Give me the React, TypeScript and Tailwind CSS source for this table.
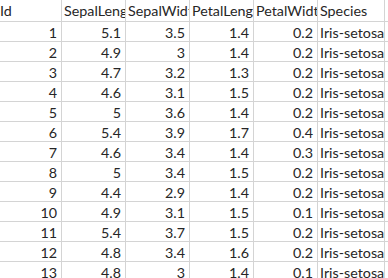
import React from "react";

const rows: [number, string, string, string, string, string][] = [
  [1, "5.1", "3.5", "1.4", "0.2", "Iris-setosa"],
  [2, "4.9", "3", "1.4", "0.2", "Iris-setosa"],
  [3, "4.7", "3.2", "1.3", "0.2", "Iris-setosa"],
  [4, "4.6", "3.1", "1.5", "0.2", "Iris-setosa"],
  [5, "5", "3.6", "1.4", "0.2", "Iris-setosa"],
  [6, "5.4", "3.9", "1.7", "0.4", "Iris-setosa"],
  [7, "4.6", "3.4", "1.4", "0.3", "Iris-setosa"],
  [8, "5", "3.4", "1.5", "0.2", "Iris-setosa"],
  [9, "4.4", "2.9", "1.4", "0.2", "Iris-setosa"],
  [10, "4.9", "3.1", "1.5", "0.1", "Iris-setosa"],
  [11, "5.4", "3.7", "1.5", "0.2", "Iris-setosa"],
  [12, "4.8", "3.4", "1.6", "0.2", "Iris-setosa"],
  [13, "4.8", "3", "1.4", "0.1", "Iris-setosa"],
];

const headers = ["Id", "SepalLengthCm", "SepalWidthCm", "PetalLengthCm", "PetalWidthCm"];

const cell = "w-[64px] shrink-0 border-r border-[#d4d4d4] overflow-hidden whitespace-nowrap flex items-center";
const last = "w-[67px] shrink-0 border-r border-[#d4d4d4] overflow-hidden whitespace-nowrap flex items-center";

export default function App() {
  return (
    <div
      className="w-[388px] h-[278px] overflow-hidden bg-white text-[#262626] text-[14.3px]"
      style={{ fontFamily: "Lato, 'Open Sans', sans-serif" }}
    >
      <div className="ml-[-2px] w-[400px]">
        <div className="flex h-[22px] border-b border-[#d4d4d4]">
          {headers.map((h, i) => (
            <div key={i} className={`${cell} pl-[2px] pt-[1px]`}>
              {h}
            </div>
          ))}
          <div className={`${last} pl-[2px] pt-[1px]`}>Species</div>
          <div className="flex-1" />
        </div>
        {rows.map((r) => (
          <div key={r[0]} className="flex h-[20px] border-b border-[#d4d4d4]">
            {r.slice(0, 5).map((v, i) => (
              <div key={i} className={`${cell} justify-end pr-[4px] pt-[2px]`}>
                {v}
              </div>
            ))}
            <div className={`${last} pl-[2px] pt-[2px]`}>{r[5]}</div>
            <div className="flex-1" />
          </div>
        ))}
      </div>
    </div>
  );
}
